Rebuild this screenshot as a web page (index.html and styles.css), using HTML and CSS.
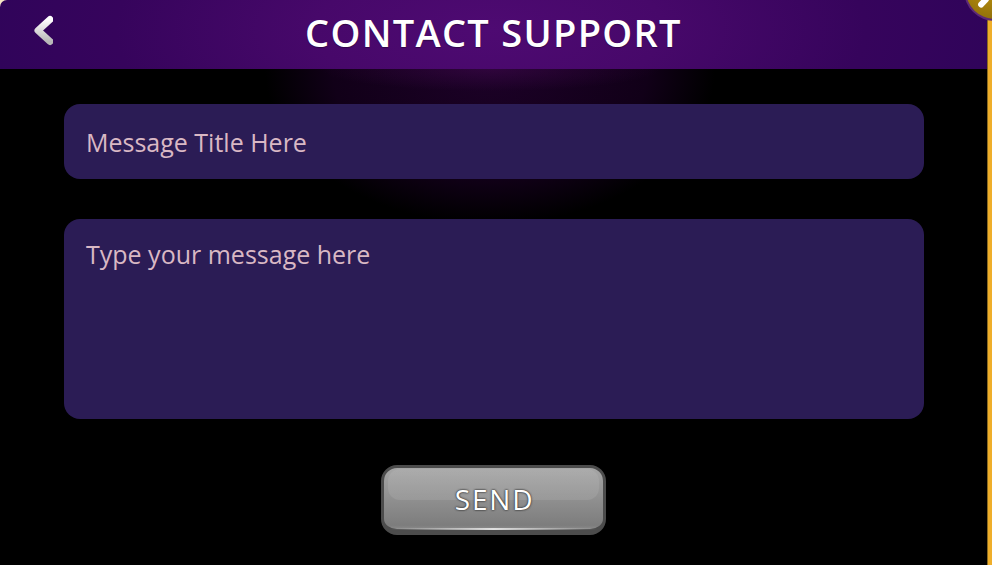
FILE: index.html
```html
<!DOCTYPE html>
<html lang="en">
<head>
<meta charset="utf-8">
<title>Contact Support</title>
<link rel="stylesheet" href="styles.css">
</head>
<body>
<div class="screen">
  <div class="content">
    <header class="topbar">
      <button class="back" aria-label="Back">
        <svg viewBox="0 0 24 32" width="24" height="32">
          <defs><linearGradient id="bk" x1="0" y1="0" x2="0" y2="1"><stop offset="0" stop-color="#ffffff"/><stop offset="1" stop-color="#b8b8b8"/></linearGradient></defs>
          <path d="M21 5.5 9 16.5l12 11" fill="none" stroke="url(#bk)" stroke-width="7" stroke-linecap="round" stroke-linejoin="round"/>
        </svg>
      </button>
      <h1>CONTACT SUPPORT</h1>
    </header>
    <main class="form">
      <div class="field title-field">Message Title Here</div>
      <div class="field body-field">Type your message here</div>
      <button class="send"><span class="shine"></span><span class="glint"></span><span class="label">SEND</span></button>
    </main>
  </div>
  <div class="rail"></div>
  <div class="coin"><span class="tick"></span></div>
</div>
</body>
</html>
```
FILE: styles.css
```css
* { box-sizing: border-box; }
html, body { margin: 0; height: 100%; background: #000; }
.screen {
  position: relative;
  display: flex;
  width: 992px;
  height: 565px;
  overflow: hidden;
  background: #f6e6c4;
  font-family: "Open Sans", sans-serif;
}
.content { flex: 1; min-width: 0; }
.rail {
  flex: none;
  width: 5px;
  background: #efae2a;
  border-left: 1px solid #8a6a20;
}
.topbar {
  position: relative;
  height: 69px;
  display: flex;
  align-items: center;
  justify-content: center;
  border-top-left-radius: 7px;
  background: radial-gradient(ellipse 500px 190px at 490px 30px, #4e0a72 0%, #47086a 35%, #36045c 75%, #30045a 100%);
}
.topbar h1 {
  margin: 0;
  font-size: 38px;
  font-weight: 600;
  color: #fff;
  letter-spacing: 1.3px;
  line-height: 1;
  position: relative;
  top: -3px;
  text-shadow: 0 1px 1px rgba(0,0,0,.35);
}
.back {
  position: absolute;
  left: 29px;
  top: 14px;
  padding: 0;
  border: 0;
  background: none;
  line-height: 0;
}
.form {
  display: flex;
  flex-direction: column;
  align-items: center;
  padding: 35px 63px 0 64px;
  height: 496px;
  background:
    radial-gradient(ellipse 170px 22px at 490px 0, rgba(70,10,85,.45) 0%, rgba(0,0,0,0) 100%),
    radial-gradient(ellipse 225px 155px at 490px 0, rgba(30,1,42,.95) 0%, rgba(20,0,28,.85) 70%, rgba(0,0,0,0) 100%),
    #000;
}
.field {
  width: 860px;
  flex: none;
  background: #2b1c55;
  color: #d9b8c4;
  font-size: 25px;
  border-radius: 16px;
}
.title-field {
  height: 75px;
  line-height: 77px;
  padding-left: 22px;
}
.body-field {
  height: 200px;
  margin-top: 40px;
  padding: 18px 22px;
  line-height: 34px;
}
.send {
  position: relative;
  width: 225px;
  height: 70px;
  margin: 46px 1px 0 0;
  padding: 0;
  flex: none;
  border: 3px solid #4c4c4c;
  border-bottom-width: 6px;
  border-radius: 16px;
  background: linear-gradient(#a6a6a6 0%, #929292 45%, #7d7d7d 94%, #8a8a8a 100%);
  font-family: inherit;
}
.shine {
  position: absolute;
  left: 4px;
  right: 4px;
  top: 1px;
  height: 31px;
  border-radius: 12px;
  background: linear-gradient(rgba(255,255,255,.07), rgba(255,255,255,.09));
}
.glint {
  position: absolute;
  left: 6px;
  right: 6px;
  bottom: -1px;
  height: 2px;
  background: linear-gradient(90deg, rgba(230,230,230,0), #e0e0e0 50%, rgba(230,230,230,0));
}
.label {
  position: relative;
  left: 1px;
  color: #fff;
  font-size: 28px;
  font-weight: 500;
  letter-spacing: 1.8px;
  text-shadow: 0 0 2px #333, 0 0 2px #333;
}
.coin {
  position: absolute;
  right: -34px;
  top: -40px;
  width: 62px;
  height: 61px;
  border-radius: 50%;
  background: radial-gradient(circle at 40% 40%, #c2960f, #7d6108);
  border: 2px solid #5d2a78;
}
.tick {
  position: absolute;
  left: 11px;
  top: 37px;
  width: 13px;
  height: 6px;
  background: #fff;
  border-radius: 3px;
  transform: rotate(-48deg);
}
```
